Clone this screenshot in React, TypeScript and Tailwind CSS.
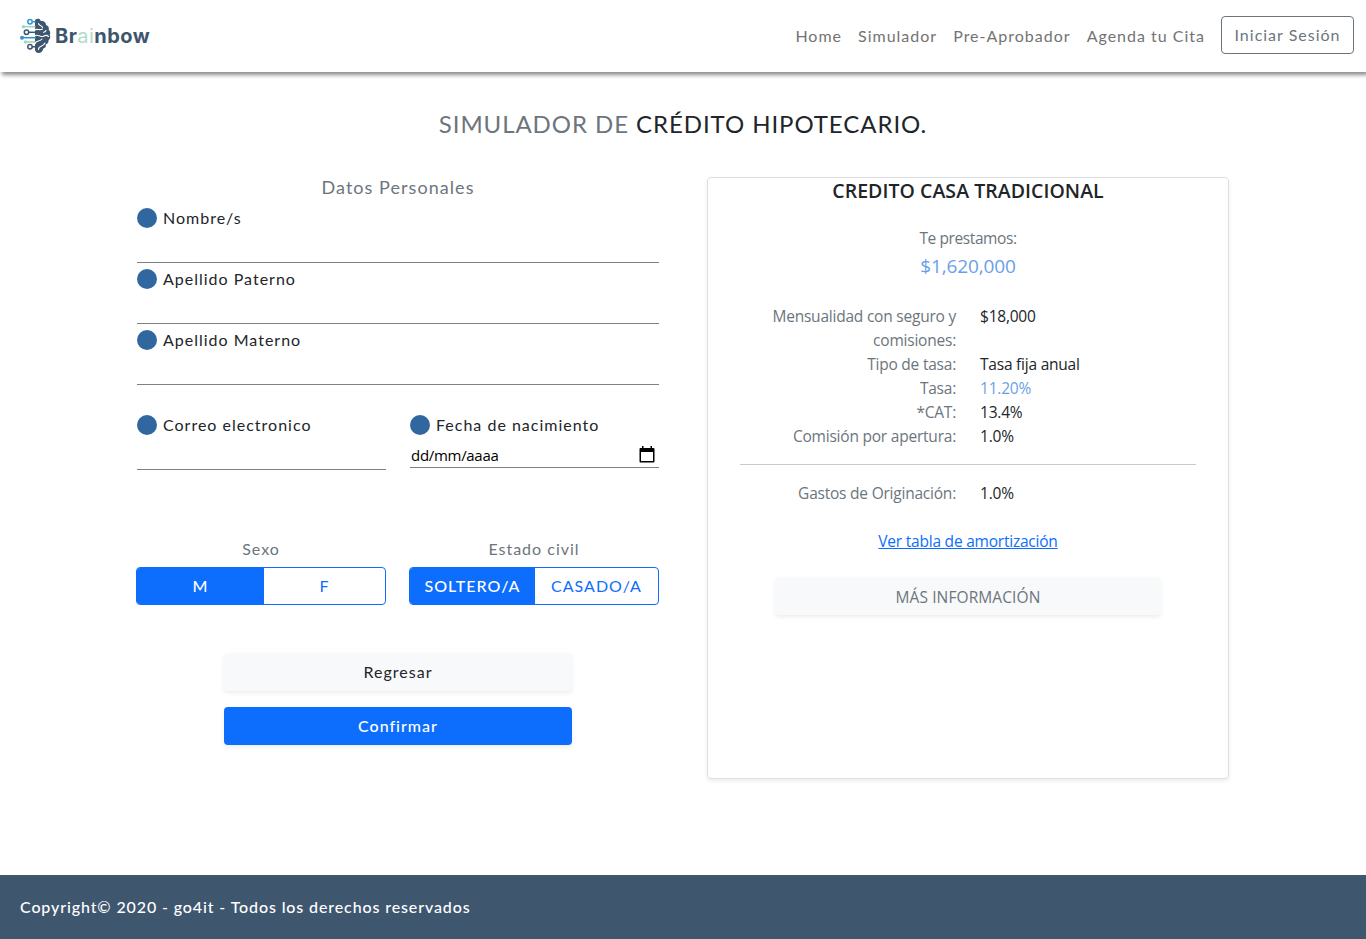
import React from "react";

const NAV = ["Home", "Simulador", "Pre-Aprobador", "Agenda tu Cita"];

function Logo() {
  return (
    <a href="#" className="flex items-center">
      <svg width="32" height="36" viewBox="0 0 32 36" fill="none">
        <path
          d="M15 3C15 1 17 .3 18.500.8c1.500.4 2 1.200 2.300 2.200C23.500 2.600 26 4 26 7c2.300.6 3.400 2.600 2.600 4.600 1.700 1.500 2.200 3.700 1.200 5.400 1 2.200.2 4.200-1.300 5.300.3 2-.8 3.700-2.700 4.100.4 2-.7 3.700-2.500 4.100-.3 2.700-2.300 4.500-4.600 4.500-2 0-3.400-1.200-3.700-3z"
          fill="#3e556e"
        />
        <path
          d="M14.500 12.300c3-2.300 4.500.6 8-1.300M14.500 18c3.500-2.800 5 2 9 .2 1.800-1 3.500-1.200 5 .3M15 26c.5-4.500 5-1.800 7-5M18.500 31.500c0-4.500 4.500-2 6.500-6.500M18.500 5.500c0 2.500 3.500 1.500 4 4M26 12.500c-.5 1.200-1.500 1.800-2.500 1.800"
          stroke="#fff"
          strokeWidth="1.100"
          strokeLinecap="round"
        />
        <path d="M12.500 3.700h3" stroke="#3095d2" strokeWidth="1.500" />
        <circle cx="10" cy="3.700" r="2.200" stroke="#3095d2" strokeWidth="1.500" />
        <path d="M3.500 8.700h12" stroke="#a4d6c2" strokeWidth="1.600" />
        <circle cx="3.500" cy="8.700" r="1.700" fill="#a4d6c2" />
        <path d="M9 14.300h7" stroke="#3e556e" strokeWidth="1.500" />
        <circle cx="6.500" cy="14.300" r="2.200" stroke="#3e556e" strokeWidth="1.500" />
        <path d="M2 19.700h14" stroke="#3095d2" strokeWidth="1.600" />
        <circle cx="2" cy="19.700" r="2" fill="#3095d2" />
        <path d="M5 24h10.500" stroke="#a4d6c2" strokeWidth="1.600" />
        <circle cx="5.500" cy="24" r="1.700" fill="#a4d6c2" />
        <path d="M12 28.800h5" stroke="#3e556e" strokeWidth="1.500" />
        <circle cx="10" cy="28.800" r="2.200" stroke="#3e556e" strokeWidth="1.500" />
      </svg>
      <span className="ml-[3px] font-['Inter',sans-serif] text-[20px] leading-6 font-bold tracking-[0.45px] text-[#3e556e]">
        Br<span className="font-normal text-[#b3dccb]">ai</span>nbow
      </span>
    </a>
  );
}

function FieldLabel({ children }: { children: React.ReactNode }) {
  return (
    <label className="flex h-6 items-center gap-[6px]">
      <span className="size-5 shrink-0 rounded-full bg-[#31679f]" />
      {children}
    </label>
  );
}

function Field({ label }: { label: string }) {
  return (
    <div className="h-[61px]">
      <FieldLabel>{label}</FieldLabel>
      <input aria-label={label} className="block h-[33px] w-full border-b border-[#808080] outline-none" />
    </div>
  );
}

function CalendarIcon() {
  return (
    <svg width="16" height="17" viewBox="0 0 16 17">
      <path d="M3 0h1.500v2h7V0H13v2h1.500q1 0 1 1v12.500q0 1-1 1h-13q-1 0-1-1V3q0-1 1-1H3zM2 6v9h12V6z" fill="#000" fillRule="evenodd" />
    </svg>
  );
}

function Toggle({ label, first, second, firstClass }: { label: string; first: string; second: string; firstClass: string }) {
  return (
    <div className="w-[250px]">
      <p className="text-center text-[#6c757d]">{label}</p>
      <div className="mt-[6px] flex h-[38px] overflow-hidden rounded border border-[#0d6efd]">
        <button className={`bg-[#0d6efd] text-center font-medium text-white ${firstClass}`}>{first}</button>
        <button className="flex-1 text-center text-[#0d6efd]">{second}</button>
      </div>
    </div>
  );
}

function Row({ label, value, blue }: { label: string; value: string; blue?: boolean }) {
  return (
    <div className="flex gap-6">
      <span className="-ml-2 w-[224px] pl-2 text-right text-[#6c757d]">{label}</span>
      <span className={blue ? "text-[#6a9fe8]" : "text-[#212529]"}>{value}</span>
    </div>
  );
}

const SHADOW = "shadow-[0_2px_4px_rgba(0,0,0,0.075)]";

export default function App() {
  return (
    <div className="flex h-[939px] flex-col bg-white font-['Lato',sans-serif] text-[16px] leading-6 tracking-[1px] text-[#212529]">
      <header className="flex h-[72px] shrink-0 items-center justify-between pr-3 pl-5 shadow-[2px_3px_4px_rgba(0,0,0,0.45)]">
        <Logo />
        <nav className="-mt-[2px] flex items-center gap-4 text-[#737373]">
          {NAV.map((n) => (
            <a key={n} href="#" className="mt-[2px]">{n}</a>
          ))}
          <button className="h-[38px] w-[133px] rounded border border-[#6c757d] text-[#6c757d]">Iniciar Sesión</button>
        </nav>
      </header>

      <main className="flex-1">
        <h1 className="pt-[37px] text-center text-[24px] leading-[29px] tracking-[0.93px] text-[#6c757d]">
          SIMULADOR DE <span className="text-[#212529]">CRÉDITO HIPOTECARIO.</span>
        </h1>

        <div className="mt-[39px] flex gap-12 pl-[137px]">
          <form className="w-[522px]">
            <h2 className="-mt-px mb-2 text-center text-[18px] leading-[22px] tracking-[1.05px] text-[#6c757d]">Datos Personales</h2>
            <Field label="Nombre/s" />
            <Field label="Apellido Paterno" />
            <Field label="Apellido Materno" />
            <div className="mt-6 flex gap-6">
              <div className="w-[249px]">
                <Field label="Correo electronico" />
              </div>
              <div className="w-[249px]">
                <FieldLabel>Fecha de nacimiento</FieldLabel>
                <div className="flex h-[31px] items-center justify-between border-b border-[#808080] pt-[8px] pr-1 pb-[4px] pl-px text-black">
                  <span className="pt-px font-['Open_Sans',sans-serif] text-[15px] tracking-[-0.3px]">dd/mm/aaaa</span>
                  <CalendarIcon />
                </div>
              </div>
            </div>
            <div className="mt-[63px] -ml-px flex gap-[23px]">
              <Toggle label="Sexo" first="M" second="F" firstClass="w-[127px]" />
              <Toggle label="Estado civil" first="SOLTERO/A" second="CASADO/A" firstClass="w-[125px]" />
            </div>
            <div className="mt-12 ml-[87px] flex w-[348px] flex-col gap-4">
              <button className={`h-[38px] rounded bg-[#f8f9fa] ${SHADOW}`}>Regresar</button>
              <button className={`h-[38px] rounded bg-[#0d6efd] font-medium text-white ${SHADOW}`}>Confirmar</button>
            </div>
          </form>

          <section className={`flex h-[602px] w-[522px] flex-col rounded border border-[#dfdfdf] px-8 font-['Open_Sans',sans-serif] text-[15.500px] tracking-[-0.22px] ${SHADOW}`}>
            <h2 className="mt-px text-center text-[19.500px] leading-6 font-semibold tracking-[0.05px]">CREDITO CASA TRADICIONAL</h2>
            <p className="mt-[23px] text-center tracking-[-0.4px] text-[#6c757d]">Te prestamos:</p>
            <p className="mt-1 text-center text-[19px] leading-6 tracking-[-0.1px] text-[#6a9fe8]">$1,620,000</p>
            <div className="mt-[26px]">
              <Row label="Mensualidad con seguro y comisiones:" value="$18,000" />
              <Row label="Tipo de tasa:" value="Tasa fija anual" />
              <Row label="Tasa:" value="11.20%" blue />
              <Row label="*CAT:" value="13.4%" />
              <Row label="Comisión por apertura:" value="1.0%" />
            </div>
            <hr className="my-4 border-[#c8c9ca]" />
            <Row label="Gastos de Originación:" value="1.0%" />
            <a href="#" className="mt-6 self-center text-[#0d6efd] underline">Ver tabla de amortización</a>
            <button className={`mt-6 h-[38px] w-[386px] self-center rounded bg-[#f8f9fa] pt-px tracking-[0.1px] text-[#6c757d] ${SHADOW}`}>MÁS INFORMACIÓN</button>
          </section>
        </div>
      </main>

      <footer className="flex h-16 shrink-0 items-center bg-[#3f566f] px-5 font-medium tracking-[0.88px] text-white">
        Copyright© 2020 - go4it - Todos los derechos reservados
      </footer>
    </div>
  );
}
